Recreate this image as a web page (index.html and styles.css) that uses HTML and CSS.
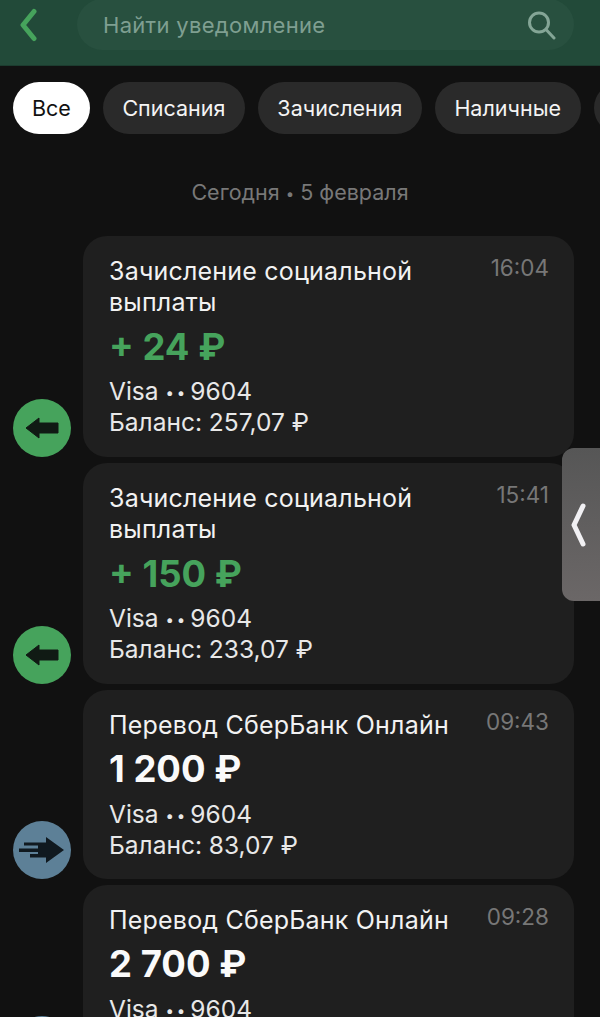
FILE: index.html
```html
<!doctype html>
<html lang="ru">
<head>
	<meta charset="utf-8">
	<title>Уведомления</title>
	<link rel="stylesheet" href="styles.css">
</head>
<body>
<div class="page">
	<header class="top-bar">
		<svg class="back" width="22" height="34" viewBox="0 0 22 34"><path d="M18 3.500 L7 17 L18 30.500" fill="none" stroke="#46a35c" stroke-width="5" stroke-linecap="round" stroke-linejoin="round"/></svg>
		<div class="search">
			<span class="search-text">Найти уведомление</span>
			<svg width="30" height="30" viewBox="0 0 30 30"><circle cx="12" cy="12.500" r="9.500" fill="none" stroke="#84a596" stroke-width="3"/><path d="M19 19.500 L27 28" stroke="#84a596" stroke-width="3" stroke-linecap="round"/></svg>
		</div>
	</header>

	<nav class="chips">
		<span class="chip chip-active">Все</span>
		<span class="chip">Списания</span>
		<span class="chip">Зачисления</span>
		<span class="chip">Наличные</span>
		<span class="chip chip-empty"></span>
	</nav>

	<div class="date">Сегодня <span class="date-dot">•</span> 5 февраля</div>

	<div class="list">
		<div class="row">
			<div class="round round-in">
				<svg width="34" height="24" viewBox="0 0 34 24"><path d="M1 12 L14 2 V7 H33 V17 H14 V22 Z" fill="#101a14" stroke="#101a14" stroke-width="1" stroke-linejoin="round"/></svg>
			</div>
			<div class="card">
				<div class="card-head"><div class="title">Зачисление социальной выплаты</div><div class="time">16:04</div></div>
				<div class="sum sum-in">+ 24 ₽</div>
				<div class="info">Visa <span class="dots">••</span>9604</div>
				<div class="info">Баланс: 257,07 ₽</div>
			</div>
		</div>
		<div class="row">
			<div class="round round-in">
				<svg width="34" height="24" viewBox="0 0 34 24"><path d="M1 12 L14 2 V7 H33 V17 H14 V22 Z" fill="#101a14" stroke="#101a14" stroke-width="1" stroke-linejoin="round"/></svg>
			</div>
			<div class="card">
				<div class="card-head"><div class="title">Зачисление социальной выплаты</div><div class="time">15:41</div></div>
				<div class="sum sum-in">+ 150 ₽</div>
				<div class="info">Visa <span class="dots">••</span>9604</div>
				<div class="info">Баланс: 233,07 ₽</div>
			</div>
		</div>
		<div class="row">
			<div class="round round-out">
				<svg width="46" height="26" viewBox="0 0 46 26"><path d="M27 0 L45 13 L27 26 V20.500 H11 V17 H19 V15 H0 V11.500 H19 V8.500 H5 V5.500 H27 Z" fill="#10191f"/></svg>
			</div>
			<div class="card card-out">
				<div class="card-head"><div class="title">Перевод СберБанк Онлайн</div><div class="time">09:43</div></div>
				<div class="sum sum-out">1 200 ₽</div>
				<div class="info">Visa <span class="dots">••</span>9604</div>
				<div class="info">Баланс: 83,07 ₽</div>
			</div>
		</div>
		<div class="row">
			<div class="round round-out">
				<svg width="46" height="26" viewBox="0 0 46 26"><path d="M27 0 L45 13 L27 26 V20.500 H11 V17 H19 V15 H0 V11.500 H19 V8.500 H5 V5.500 H27 Z" fill="#10191f"/></svg>
			</div>
			<div class="card card-out card-cut">
				<div class="card-head"><div class="title">Перевод СберБанк Онлайн</div><div class="time">09:28</div></div>
				<div class="sum sum-out">2 700 ₽</div>
				<div class="info">Visa <span class="dots">••</span>9604</div>
			</div>
		</div>
	</div>

	<div class="handle">
		<svg width="18" height="46" viewBox="0 0 18 46"><path d="M14 4 L5 23 L14 42" fill="none" stroke="#f1f0f3" stroke-width="5" stroke-linecap="round" stroke-linejoin="round"/></svg>
	</div>
</div>
</body>
</html>
```

FILE: styles.css
```css
*{margin:0;padding:0;box-sizing:border-box;}
html,body{height:100%;overflow:hidden;background:#111;}
body{font-family:"Inter","Roboto","Liberation Sans",sans-serif;color:#f2f2f2;}
.page{position:relative;width:600px;height:1017px;overflow:hidden;background:#111;}

.top-bar{height:66px;background:#224a39;border-bottom:1px solid #1c3c2f;display:flex;align-items:flex-start;padding-left:16px;gap:39px;}
.back{flex:none;margin-top:8px;}
.search{flex:none;width:497px;height:51px;margin-top:-1px;border-radius:26px;background:#28503f;display:flex;align-items:center;justify-content:space-between;padding:0 17px 0 26px;}
.search-text{font-size:22px;letter-spacing:.3px;color:#7f9f91;}

.chips{display:flex;gap:13px;padding:16px 0 0 13px;overflow:hidden;}
.chip{flex:none;height:52px;line-height:52px;padding:0 19.500px;border-radius:26px;background:#2a2a2a;font-size:21.500px;color:#f4f4f4;}
.chip-active{padding:0 19px;background:#fff;color:#111;}
.chip-empty{width:60px;}

.date{margin-top:45px;height:27px;line-height:27px;text-align:center;font-size:21.500px;color:#787878;}
.date-dot{font-size:15px;vertical-align:1px;line-height:1;}

.list{margin-top:30px;display:flex;flex-direction:column;gap:6px;padding-left:13px;}
.row{display:flex;align-items:flex-end;gap:12px;}
.round{flex:none;width:58px;height:58px;border-radius:50%;display:flex;align-items:center;justify-content:center;}
.round-in{background:#46a35c;}
.round-out{background:#5d8097;}

.card{flex:none;width:491px;padding:20px 25px 19px 26px;border-radius:24px;background:#1f1f1f;}
.card-out{padding-bottom:18px;}
.card-cut{min-height:189px;}
.card-head{display:flex;justify-content:space-between;align-items:flex-start;}
.title{width:345px;font-size:25px;line-height:31px;letter-spacing:.2px;color:#f2f2f2;}
.time{font-size:22.500px;line-height:24px;color:#777;}
.sum{margin:7px 0;font-size:36.500px;line-height:44px;font-weight:700;color:#fafafa;}
.sum-in{color:#46a35c;}
.sum-out{margin:6px 0 8px;}
.info{height:31px;font-size:24.500px;line-height:31px;color:#e8e8e8;}
.dots{font-size:15px;line-height:1;vertical-align:2px;letter-spacing:3px;margin-right:2px;}

.handle{position:absolute;left:562px;top:448px;width:38px;height:153px;border-radius:12px 0 0 12px;background:linear-gradient(#565656,#6b6767);padding-left:7px;display:flex;align-items:center;}
```
